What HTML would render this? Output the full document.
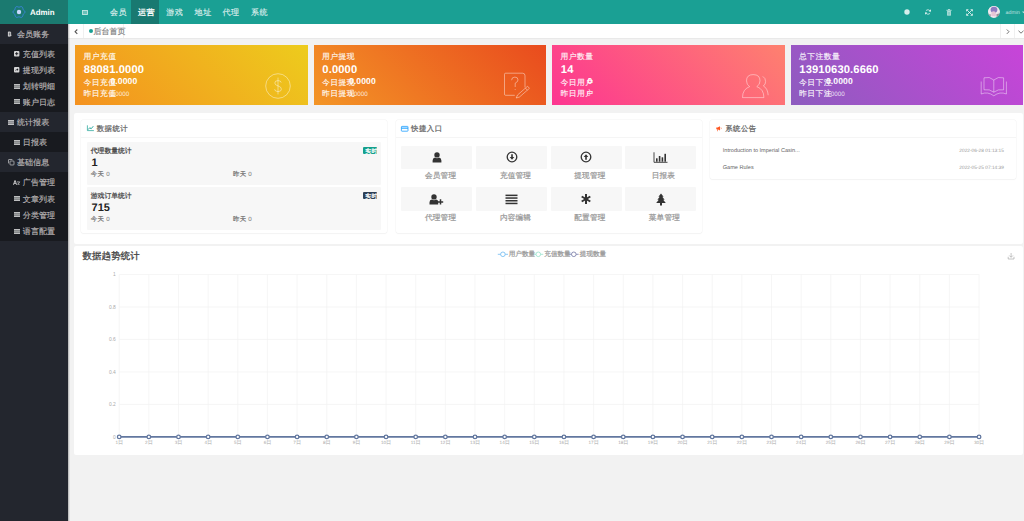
<!DOCTYPE html>
<html lang="zh">
<head>
<meta charset="utf-8">
<title>Admin</title>
<style>
*{margin:0;padding:0;box-sizing:border-box;}
html,body{width:1024px;height:521px;overflow:hidden;}
body{background:#f2f2f2;font-family:"Liberation Sans",sans-serif;position:relative;color:#666;}
.abs{position:absolute;}
.t{position:absolute;white-space:nowrap;line-height:1;}
svg.abs{overflow:visible;}
</style>
</head>
<body>
<div class="abs" style="left:0px;top:0px;width:68px;height:24px;background:#1b7a70;"></div>
<div class="abs" style="left:68px;top:0px;width:956px;height:24px;background:#1aa094;"></div>
<svg class="abs" style="left:12px;top:5px" width="14" height="14" viewBox="0 0 14 14"><path d="M12.95 7.00 L12.85 7.51 L12.59 7.99 L12.22 8.40 L11.82 8.75 L11.46 9.08 L11.20 9.43 L11.03 9.82 L10.93 10.29 L10.82 10.82 L10.65 11.35 L10.37 11.81 L9.98 12.15 L9.48 12.33 L8.94 12.33 L8.40 12.22 L7.89 12.05 L7.43 11.90 L7.00 11.85 L6.57 11.90 L6.11 12.05 L5.60 12.22 L5.06 12.33 L4.52 12.33 L4.03 12.15 L3.63 11.81 L3.35 11.35 L3.18 10.82 L3.07 10.29 L2.97 9.82 L2.80 9.43 L2.54 9.08 L2.18 8.75 L1.78 8.40 L1.41 7.99 L1.15 7.51 L1.05 7.00 L1.15 6.49 L1.41 6.01 L1.78 5.60 L2.18 5.25 L2.54 4.92 L2.80 4.57 L2.97 4.18 L3.07 3.71 L3.18 3.18 L3.35 2.65 L3.63 2.19 L4.02 1.85 L4.52 1.67 L5.06 1.67 L5.60 1.78 L6.11 1.95 L6.57 2.10 L7.00 2.15 L7.43 2.10 L7.89 1.95 L8.40 1.78 L8.94 1.67 L9.48 1.67 L9.97 1.85 L10.37 2.19 L10.65 2.65 L10.82 3.18 L10.93 3.71 L11.03 4.18 L11.20 4.58 L11.46 4.92 L11.82 5.25 L12.22 5.60 L12.59 6.01 L12.85 6.49 L12.95 7.00Z" fill="none" stroke="#3d86dc" stroke-width="1"/><circle cx="7" cy="7" r="2.2" fill="#c9d9ff"/></svg>
<div class="abs" style="left:131px;top:0px;width:28px;height:24px;background:#197971;"></div>
<svg class="abs" style="left:82px;top:9.5px" width="6" height="5" viewBox="0 0 6 5"><rect x="0.5" y="0.5" width="5" height="4" fill="rgba(255,255,255,.35)" stroke="rgba(255,255,255,.7)" stroke-width="0.9"/></svg>
<svg class="abs" style="left:904px;top:9px" width="6" height="6" viewBox="0 0 6 6"><circle cx="3" cy="3" r="2.7" fill="rgba(255,255,255,.82)"/></svg>
<svg class="abs" style="left:924.7px;top:9px" width="6" height="6" viewBox="0 0 6 6" fill="none" stroke="rgba(255,255,255,.82)" stroke-width="0.85"><path d="M5.2 2.4 A2.4 2.4 0 0 0 0.9 1.9"/><path d="M0.8 3.6 A2.4 2.4 0 0 0 5.1 4.1"/></svg><svg class="abs" style="left:924.7px;top:9px" width="6" height="6" viewBox="0 0 6 6" fill="rgba(255,255,255,.82)"><path d="M3.6 2.6 H6 V0.3 Z"/><path d="M2.4 3.4 H0 V5.7 Z"/></svg>
<svg class="abs" style="left:945.7px;top:8.6px" width="6" height="7" viewBox="0 0 6 7"><path d="M1.1 2.1 H4.9 V6.6 H1.1 Z" fill="rgba(255,255,255,.72)"/><path d="M0.4 1.3 H5.6" stroke="rgba(255,255,255,.72)" stroke-width="0.9"/><path d="M2 0.5 H4" stroke="rgba(255,255,255,.72)" stroke-width="0.8"/><path d="M2.3 3 V5.8 M3.7 3 V5.8" stroke="#1aa094" stroke-width="0.4"/></svg>
<svg class="abs" style="left:966px;top:8.6px" width="7" height="7" viewBox="0 0 7 7"><path d="M1.4 1.4 L5.6 5.6 M5.6 1.4 L1.4 5.6" stroke="rgba(255,255,255,.85)" stroke-width="0.9"/><g fill="rgba(255,255,255,.85)"><path d="M0.2 0.2 H2.8 L0.2 2.8 Z"/><path d="M6.8 0.2 H4.2 L6.8 2.8 Z"/><path d="M0.2 6.8 H2.8 L0.2 4.2 Z"/><path d="M6.8 6.8 H4.2 L6.8 4.2 Z"/></g></svg>
<svg class="abs" style="left:987.9px;top:6.4px" width="12" height="12" viewBox="0 0 12 12"><defs><clipPath id="av"><circle cx="5.9" cy="5.9" r="5.9"/></clipPath><filter id="avb"><feGaussianBlur stdDeviation="0.45"/></filter></defs><g clip-path="url(#av)"><rect width="12" height="12" fill="#ddd5dc"/><g filter="url(#avb)"><path d="M0 4 Q0 0 4 0 L8 0 Q12 0 12 4 V7 L10 6 Q11 9 12 10 V12 H0 V10 Q1.5 8 1 6 L0 7 Z" fill="#efeaee"/><ellipse cx="6" cy="3.8" rx="3.4" ry="3.1" fill="#8c7bc2"/><ellipse cx="5.6" cy="8.4" rx="2.3" ry="3.2" fill="#e6c6d6"/><path d="M8.5 8 L12 7.5 V12 H8.5 Z" fill="#9c8c98"/><path d="M0 8.5 L2.8 8.2 L2.5 12 H0 Z" fill="#a495a4"/><path d="M3 10.5 Q6 9.8 8.5 11 V12 H3 Z" fill="#f4f0f6"/></g></g></svg>
<svg class="abs" style="left:1021.5px;top:11px" width="3" height="3" viewBox="0 0 3 3"><path d="M0 0.4 H3 L1.5 2.2 Z" fill="rgba(255,255,255,.7)"/></svg>
<div class="abs" style="left:0px;top:24px;width:68px;height:497px;background:#23262e;z-index:1"></div>
<div class="abs" style="left:0;top:0;width:68px;height:521px;z-index:2"><div class="abs" style="left:0px;top:44px;width:68px;height:68px;background:#181a1f;"></div><div class="abs" style="left:0px;top:132px;width:68px;height:20px;background:#181a1f;"></div><div class="abs" style="left:0px;top:172px;width:68px;height:69px;background:#181a1f;"></div><svg class="abs" style="left:7.2px;top:30.8px" width="5" height="6" viewBox="0 0 5 6"><path d="M0.9 0.9 H2.9 Q4.3 0.9 4.3 2.1 Q4.3 2.8 3.5 3 Q4.5 3.3 4.5 4.2 Q4.5 5.2 3 5.2 H0.9 Z" fill="rgba(255,255,255,.82)"/><path d="M1.8 1.8 H2.8 Q3.3 1.8 3.3 2.2 Q3.3 2.6 2.8 2.6 H1.8 Z M1.8 3.5 H2.9 Q3.5 3.5 3.5 3.9 Q3.5 4.3 2.9 4.3 H1.8 Z" fill="#23262e"/><path d="M1.8 0 V1 M2.9 0 V1 M1.8 5.1 V6 M2.9 5.1 V6" stroke="rgba(255,255,255,.82)" stroke-width="0.5"/></svg><svg class="abs" style="left:14.2px;top:51.3px" width="5.4" height="5.4" viewBox="0 0 5.4 5.4"><rect width="5.4" height="5.4" rx="0.9" fill="rgba(255,255,255,.82)"/><path d="M2.7 1.1 V4.3 M1.1 2.7 H4.3" stroke="#181a1f" stroke-width="0.9"/></svg><svg class="abs" style="left:14.2px;top:67.3px" width="5.4" height="5.4" viewBox="0 0 5.4 5.4"><rect width="5.4" height="5.4" rx="0.9" fill="rgba(255,255,255,.82)"/><path d="M1.2 4.2 Q1.3 2.4 3.1 2.2 V1.3 L4.4 2.6 L3.1 3.9 V3 Q2.1 3 1.2 4.2 Z" fill="#181a1f"/></svg><svg class="abs" style="left:13.90px;top:83.50px" width="6" height="5" viewBox="0 0 6 5"><rect width="6" height="5" fill="rgba(255,255,255,.72)"/><path d="M0 1.75 H6 M0 3.25 H6" stroke="#181a1f" stroke-width="0.45"/></svg><svg class="abs" style="left:13.90px;top:99.30px" width="6" height="5" viewBox="0 0 6 5"><rect width="6" height="5" fill="rgba(255,255,255,.72)"/><path d="M0 1.75 H6 M0 3.25 H6" stroke="#181a1f" stroke-width="0.45"/></svg><svg class="abs" style="left:13.90px;top:139.70px" width="6" height="5" viewBox="0 0 6 5"><rect width="6" height="5" fill="rgba(255,255,255,.72)"/><path d="M0 1.75 H6 M0 3.25 H6" stroke="#181a1f" stroke-width="0.45"/></svg><svg class="abs" style="left:13.90px;top:196.30px" width="6" height="5" viewBox="0 0 6 5"><rect width="6" height="5" fill="rgba(255,255,255,.72)"/><path d="M0 1.75 H6 M0 3.25 H6" stroke="#181a1f" stroke-width="0.45"/></svg><svg class="abs" style="left:13.90px;top:212.40px" width="6" height="5" viewBox="0 0 6 5"><rect width="6" height="5" fill="rgba(255,255,255,.72)"/><path d="M0 1.75 H6 M0 3.25 H6" stroke="#181a1f" stroke-width="0.45"/></svg><svg class="abs" style="left:13.90px;top:228.50px" width="6" height="5" viewBox="0 0 6 5"><rect width="6" height="5" fill="rgba(255,255,255,.72)"/><path d="M0 1.75 H6 M0 3.25 H6" stroke="#181a1f" stroke-width="0.45"/></svg><svg class="abs" style="left:7.70px;top:119.70px" width="6" height="5" viewBox="0 0 6 5"><rect width="6" height="5" fill="rgba(255,255,255,.72)"/><path d="M0 1.75 H6 M0 3.25 H6" stroke="#23262e" stroke-width="0.45"/></svg><svg class="abs" style="left:7.6px;top:159px" width="6.4" height="6.4" viewBox="0 0 6.4 6.4" fill="none" stroke="rgba(255,255,255,.72)" stroke-width="0.75"><rect x="2" y="2" width="4" height="4" rx="0.7"/><path d="M0.5 4.4 V1 Q0.5 0.5 1 0.5 H4.4"/></svg><svg class="abs" style="left:13.4px;top:180.2px" width="7" height="5" viewBox="0 0 7 5"><path d="M0 4.8 L1.6 0.3 H2.5 L4 4.8 H3.1 L2.75 3.7 H1.3 L0.95 4.8 Z M1.55 2.9 H2.5 L2.05 1.4 Z" fill="rgba(255,255,255,.82)"/><path d="M3.8 1.9 H6.8 L4.6 4.3 H6.6" fill="none" stroke="rgba(255,255,255,.82)" stroke-width="0.7"/></svg></div>
<div class="abs" style="left:68px;top:24px;width:2px;height:497px;background:linear-gradient(to right,rgba(0,0,0,.28),rgba(0,0,0,0));z-index:2"></div>
<div class="abs" style="left:68px;top:24px;width:956px;height:14px;background:#fff;"></div>
<div class="abs" style="left:68px;top:38px;width:956px;height:1px;background:rgba(0,0,0,.035);"></div>
<svg class="abs" style="left:73.5px;top:28.6px" width="4" height="5.4" viewBox="0 0 4 5.4"><path d="M3.3 0.5 L1.1 2.7 L3.3 4.9" fill="none" stroke="#555" stroke-width="1.1"/></svg>
<div class="abs" style="left:83.3px;top:24px;width:0.6px;height:14px;background:#f0f0f0;"></div>
<div class="abs" style="left:88.7px;top:29.4px;width:4px;height:4px;border-radius:50%;background:#1aa094"></div>
<div class="abs" style="left:123.2px;top:24px;width:0.6px;height:14px;background:#f0f0f0;"></div>
<div class="abs" style="left:1000px;top:24px;width:0.6px;height:14px;background:#f0f0f0;"></div>
<svg class="abs" style="left:1005.8px;top:28.6px" width="4" height="5.4" viewBox="0 0 4 5.4"><path d="M0.8 0.5 L3 2.7 L0.8 4.9" fill="none" stroke="#666" stroke-width="0.9"/></svg>
<div class="abs" style="left:1014px;top:24px;width:0.6px;height:14px;background:#f0f0f0;"></div>
<svg class="abs" style="left:1017.6px;top:29.6px" width="6" height="4" viewBox="0 0 6 4"><path d="M0.5 0.8 L3 3.2 L5.5 0.8" fill="none" stroke="#666" stroke-width="0.9"/></svg>
<div class="abs" style="left:75px;top:45px;width:232.5px;height:60px;background:linear-gradient(45deg,#f4911f,#edcc1d)"></div>
<svg class="abs" style="left:264.6px;top:73.3px" width="26" height="26" viewBox="0 0 26 26"><circle cx="13" cy="13" r="12.3" fill="none" stroke="rgba(255,255,255,.45)" stroke-width="0.95"/><path d="M16.2 9.6 Q16 7.6 13 7.6 Q9.8 7.6 9.8 10 Q9.8 12 13 12.9 Q16.4 13.8 16.4 16.1 Q16.4 18.6 13 18.6 Q9.8 18.6 9.6 16.2 M13 4.6 V21.4" fill="none" stroke="rgba(255,255,255,.45)" stroke-width="0.95"/></svg>
<div class="abs" style="left:313.5px;top:45px;width:232.5px;height:60px;background:linear-gradient(45deg,#f39526,#e94b1e)"></div>
<svg class="abs" style="left:502.5px;top:72px" width="28" height="28" viewBox="0 0 28 28" fill="none" stroke="rgba(255,255,255,.45)" stroke-width="0.95"><path d="M11.8 23.3 H2.6 Q1.5 23.3 1.5 22.2 V2.3 Q1.5 1.2 2.6 1.2 H19.5 Q22 1.2 22 3.7 V15.5"/><path d="M8.6 8.2 Q8.6 5.1 11.9 5.1 Q15 5.1 15 7.9 Q15 9.8 12.2 11.2 V15"/><path d="M12.2 17.2 V18"/><path d="M13.2 26 L14.55 22.97 L24.58 14.24 L26.42 16.36 L16.39 25.09 Z M22.47 16.08 L24.31 18.2"/></svg>
<div class="abs" style="left:552px;top:45px;width:232.5px;height:60px;background:linear-gradient(45deg,#fd3591,#fe816f)"></div>
<svg class="abs" style="left:740.5px;top:73px" width="30" height="27" viewBox="0 0 30 27" fill="none" stroke="rgba(255,255,255,.45)" stroke-width="0.95"><path d="M1.5 24.6 H22.9 Q22.9 16.2 15.8 13.6 Q19 11.8 19 7.8 Q19 1.6 12.2 1.6 Q5.5 1.6 5.5 7.8 Q5.5 11.8 8.7 13.6 Q1.5 16.2 1.5 24.6 Z"/><path d="M21.8 3.4 Q24.6 5 24.6 8.6 Q24.6 11.2 22.4 13 Q26.6 15.2 27.2 22.2"/></svg>
<div class="abs" style="left:790.5px;top:45px;width:232.5px;height:60px;background:linear-gradient(45deg,#8d5cbf,#c844d9)"></div>
<svg class="abs" style="left:979.5px;top:75px" width="28" height="22" viewBox="0 0 28 22" fill="none" stroke="rgba(255,255,255,.45)" stroke-width="0.95"><path d="M13.8 17.2 Q9.6 13.8 4 14.8 V2.8 Q9.6 1.2 13.8 5 Q18 1.2 23.6 2.8 V14.8 Q18 13.8 13.8 17.2 Z M13.8 5 V17.2"/><path d="M1.2 6.5 V19 Q7.6 16.2 13.8 20.8 Q20 16.2 26.4 19 V6.5"/></svg>
<div class="abs" style="left:74px;top:113px;width:949px;height:131px;background:#fff;border-radius:2px"></div>
<div class="abs" style="left:81px;top:120px;width:306px;height:113px;background:#fff;border-radius:2px;box-shadow:0 0 0 0.5px rgba(0,0,0,.045),0 0.5px 1.5px rgba(0,0,0,.03)"></div>
<div class="abs" style="left:395.5px;top:120px;width:306px;height:112.5px;background:#fff;border-radius:2px;box-shadow:0 0 0 0.5px rgba(0,0,0,.045),0 0.5px 1.5px rgba(0,0,0,.03)"></div>
<div class="abs" style="left:710px;top:120px;width:306px;height:59px;background:#fff;border-radius:2px;box-shadow:0 0 0 0.5px rgba(0,0,0,.045),0 0.5px 1.5px rgba(0,0,0,.03)"></div>
<div class="abs" style="left:81px;top:137.3px;width:306px;height:0.6px;background:#f5f5f5;"></div>
<div class="abs" style="left:395.5px;top:137.3px;width:306px;height:0.6px;background:#f5f5f5;"></div>
<div class="abs" style="left:710px;top:137.3px;width:306px;height:0.6px;background:#f5f5f5;"></div>
<svg class="abs" style="left:87px;top:125.2px" width="7" height="6" viewBox="0 0 7 6"><path d="M0.4 0.3 V5.6 H6.9" fill="none" stroke="#1aa094" stroke-width="0.7"/><path d="M1.1 4.6 L2.8 2.7 L4.1 3.8 L6.3 1.2" fill="none" stroke="#1aa094" stroke-width="0.9"/></svg>
<svg class="abs" style="left:401px;top:125.5px" width="7.4" height="5.6" viewBox="0 0 7.4 5.6"><rect x="0.4" y="0.4" width="6.6" height="4.8" rx="0.5" fill="none" stroke="#1e9fff" stroke-width="0.8"/><rect x="0.4" y="1.6" width="6.6" height="1.1" fill="#1e9fff"/></svg>
<svg class="abs" style="left:715.6px;top:125.6px" width="6.4" height="5.6" viewBox="0 0 6.4 5.6"><path d="M0.3 1.6 H1.6 L4 0.3 V4.4 L1.6 3.3 V5.2 H1 V3.3 H0.3 Z" fill="#ff5722"/><path d="M4.9 1.5 Q5.7 2.3 4.9 3.2" fill="none" stroke="#ff5722" stroke-width="0.6"/></svg>
<div class="abs" style="left:87px;top:142px;width:294px;height:42.5px;background:#f7f7f7;border-radius:1px"></div>
<div class="abs" style="left:362.5px;top:147.2px;width:14.6px;height:6.8px;background:#16a08c;border-radius:1px"></div>
<div class="abs" style="left:87px;top:187px;width:294px;height:42.5px;background:#f7f7f7;border-radius:1px"></div>
<div class="abs" style="left:362.5px;top:192.2px;width:14.6px;height:6.8px;background:#2f4056;border-radius:1px"></div>
<div class="abs" style="left:401.2px;top:145.7px;width:71px;height:23.6px;background:#f7f7f7;border-radius:1px;display:flex;align-items:center;justify-content:center"><svg width="10" height="11" viewBox="0 0 10 11"><circle cx="5" cy="2.9" r="2.7" fill="#333"/><path d="M0.6 10.6 V8.4 Q0.6 6 3 5.6 Q5 6.8 7 5.6 Q9.4 6 9.4 8.4 V10.6 Z" fill="#333"/></svg></div>
<div class="abs" style="left:476.1px;top:145.7px;width:71px;height:23.6px;background:#f7f7f7;border-radius:1px;display:flex;align-items:center;justify-content:center"><svg width="12" height="12" viewBox="0 0 12 12"><circle cx="6" cy="6" r="4.8" fill="none" stroke="#333" stroke-width="1.3"/><path d="M5.2 3.2 H6.8 V5.9 H8.3 L6 8.7 L3.7 5.9 H5.2 Z" fill="#333"/></svg></div>
<div class="abs" style="left:550.5px;top:145.7px;width:71px;height:23.6px;background:#f7f7f7;border-radius:1px;display:flex;align-items:center;justify-content:center"><svg width="12" height="12" viewBox="0 0 12 12"><circle cx="6" cy="6" r="4.8" fill="none" stroke="#333" stroke-width="1.3"/><path d="M5.2 8.8 H6.8 V6.1 H8.3 L6 3.3 L3.7 6.1 H5.2 Z" fill="#333"/></svg></div>
<div class="abs" style="left:625px;top:145.7px;width:71px;height:23.6px;background:#f7f7f7;border-radius:1px;display:flex;align-items:center;justify-content:center"><svg width="15" height="11" viewBox="0 0 15 11"><path d="M1 0.3 V10.3 H14.5" fill="none" stroke="#333" stroke-width="0.9"/><rect x="3" y="6.3" width="1.6" height="3.4" fill="#333"/><rect x="5.8" y="4" width="1.6" height="5.7" fill="#333"/><rect x="8.6" y="5.3" width="1.6" height="4.4" fill="#333"/><rect x="11.4" y="1.8" width="1.6" height="7.9" fill="#333"/></svg></div>
<div class="abs" style="left:401.2px;top:187.4px;width:71px;height:23.6px;background:#f7f7f7;border-radius:1px;display:flex;align-items:center;justify-content:center"><svg width="15" height="11" viewBox="0 0 15 11"><circle cx="5" cy="2.9" r="2.7" fill="#333"/><path d="M0.5 10.4 V8.2 Q0.5 6 3 5.6 Q5 6.8 7 5.6 Q8.6 5.8 9.2 7 V10.4 Z" fill="#333"/><path d="M8.8 7.9 H14.2 M11.5 5.2 V10.6" stroke="#333" stroke-width="1.5"/></svg></div>
<div class="abs" style="left:476.1px;top:187.4px;width:71px;height:23.6px;background:#f7f7f7;border-radius:1px;display:flex;align-items:center;justify-content:center"><svg width="13" height="11" viewBox="0 0 13 11"><rect x="0.5" y="0.6" width="12" height="1.5" fill="#333"/><rect x="0.5" y="3.3" width="12" height="1.5" fill="#333"/><rect x="0.5" y="6" width="12" height="1.5" fill="#333"/><rect x="0.5" y="8.7" width="12" height="1.5" fill="#333"/></svg></div>
<div class="abs" style="left:550.5px;top:187.4px;width:71px;height:23.6px;background:#f7f7f7;border-radius:1px;display:flex;align-items:center;justify-content:center"><svg width="12" height="12" viewBox="0 0 12 12"><g stroke="#333" stroke-width="2"><path d="M6 1 V11"/><path d="M1.7 3.5 L10.3 8.5"/><path d="M1.7 8.5 L10.3 3.5"/></g></svg></div>
<div class="abs" style="left:625px;top:187.4px;width:71px;height:23.6px;background:#f7f7f7;border-radius:1px;display:flex;align-items:center;justify-content:center"><svg width="12" height="13" viewBox="0 0 12 13"><path d="M6 0.5 L8.6 3.8 H7.3 L9.6 6.8 H8.2 L10.8 10 H7 V12.5 H5 V10 H1.2 L3.8 6.8 H2.4 L4.7 3.8 H3.4 Z" fill="#333"/></svg></div>
<div class="abs" style="left:74px;top:246px;width:949px;height:209px;background:#fff;border-radius:2px"></div>
<div class="abs" style="left:0;top:0;width:1024px;height:521px;pointer-events:none"><svg class="abs" style="left:0;top:0" width="1024" height="521" viewBox="0 0 1024 521"><path d="M119.20 274.50V436.90M148.85 274.50V436.90M178.50 274.50V436.90M208.15 274.50V436.90M237.80 274.50V436.90M267.45 274.50V436.90M297.10 274.50V436.90M326.75 274.50V436.90M356.40 274.50V436.90M386.05 274.50V436.90M415.70 274.50V436.90M445.35 274.50V436.90M475.00 274.50V436.90M504.65 274.50V436.90M534.30 274.50V436.90M563.95 274.50V436.90M593.60 274.50V436.90M623.25 274.50V436.90M652.90 274.50V436.90M682.55 274.50V436.90M712.20 274.50V436.90M741.85 274.50V436.90M771.50 274.50V436.90M801.15 274.50V436.90M830.80 274.50V436.90M860.45 274.50V436.90M890.10 274.50V436.90M919.75 274.50V436.90M949.40 274.50V436.90M979.05 274.50V436.90M119.20 274.50H979.05M119.20 306.98H979.05M119.20 339.46H979.05M119.20 371.94H979.05M119.20 404.42H979.05" stroke="#f2f2f2" stroke-width="0.7" fill="none"/><g font-family="Liberation Sans" font-size="4.9" fill="#aaa" text-anchor="end"><text x="115.80" y="276.25">1</text><text x="115.80" y="308.73">0.8</text><text x="115.80" y="341.21">0.6</text><text x="115.80" y="373.69">0.4</text><text x="115.80" y="406.17">0.2</text><text x="115.80" y="438.65">0</text></g><g font-family="Liberation Sans" font-size="4.6" fill="#aaa" text-anchor="middle" text-rendering="geometricPrecision"><text x="119.30" y="444">1<tspan font-size="5.2">日</tspan></text><text x="148.95" y="444">2<tspan font-size="5.2">日</tspan></text><text x="178.60" y="444">3<tspan font-size="5.2">日</tspan></text><text x="208.25" y="444">4<tspan font-size="5.2">日</tspan></text><text x="237.90" y="444">5<tspan font-size="5.2">日</tspan></text><text x="267.55" y="444">6<tspan font-size="5.2">日</tspan></text><text x="297.20" y="444">7<tspan font-size="5.2">日</tspan></text><text x="326.85" y="444">8<tspan font-size="5.2">日</tspan></text><text x="356.50" y="444">9<tspan font-size="5.2">日</tspan></text><text x="386.15" y="444">10<tspan font-size="5.2">日</tspan></text><text x="415.80" y="444">11<tspan font-size="5.2">日</tspan></text><text x="445.45" y="444">12<tspan font-size="5.2">日</tspan></text><text x="475.10" y="444">13<tspan font-size="5.2">日</tspan></text><text x="504.75" y="444">14<tspan font-size="5.2">日</tspan></text><text x="534.40" y="444">15<tspan font-size="5.2">日</tspan></text><text x="564.05" y="444">16<tspan font-size="5.2">日</tspan></text><text x="593.70" y="444">17<tspan font-size="5.2">日</tspan></text><text x="623.35" y="444">18<tspan font-size="5.2">日</tspan></text><text x="653.00" y="444">19<tspan font-size="5.2">日</tspan></text><text x="682.65" y="444">20<tspan font-size="5.2">日</tspan></text><text x="712.30" y="444">21<tspan font-size="5.2">日</tspan></text><text x="741.95" y="444">22<tspan font-size="5.2">日</tspan></text><text x="771.60" y="444">23<tspan font-size="5.2">日</tspan></text><text x="801.25" y="444">24<tspan font-size="5.2">日</tspan></text><text x="830.90" y="444">25<tspan font-size="5.2">日</tspan></text><text x="860.55" y="444">26<tspan font-size="5.2">日</tspan></text><text x="890.20" y="444">27<tspan font-size="5.2">日</tspan></text><text x="919.85" y="444">28<tspan font-size="5.2">日</tspan></text><text x="949.50" y="444">29<tspan font-size="5.2">日</tspan></text><text x="979.15" y="444">30<tspan font-size="5.2">日</tspan></text></g><path d="M119.20 436.90H979.05" stroke="#62779f" stroke-width="1.8" fill="none"/><g fill="#fff" stroke="#62779f" stroke-width="1.3"><circle cx="119.20" cy="436.90" r="1.8"/><circle cx="148.85" cy="436.90" r="1.8"/><circle cx="178.50" cy="436.90" r="1.8"/><circle cx="208.15" cy="436.90" r="1.8"/><circle cx="237.80" cy="436.90" r="1.8"/><circle cx="267.45" cy="436.90" r="1.8"/><circle cx="297.10" cy="436.90" r="1.8"/><circle cx="326.75" cy="436.90" r="1.8"/><circle cx="356.40" cy="436.90" r="1.8"/><circle cx="386.05" cy="436.90" r="1.8"/><circle cx="415.70" cy="436.90" r="1.8"/><circle cx="445.35" cy="436.90" r="1.8"/><circle cx="475.00" cy="436.90" r="1.8"/><circle cx="504.65" cy="436.90" r="1.8"/><circle cx="534.30" cy="436.90" r="1.8"/><circle cx="563.95" cy="436.90" r="1.8"/><circle cx="593.60" cy="436.90" r="1.8"/><circle cx="623.25" cy="436.90" r="1.8"/><circle cx="652.90" cy="436.90" r="1.8"/><circle cx="682.55" cy="436.90" r="1.8"/><circle cx="712.20" cy="436.90" r="1.8"/><circle cx="741.85" cy="436.90" r="1.8"/><circle cx="771.50" cy="436.90" r="1.8"/><circle cx="801.15" cy="436.90" r="1.8"/><circle cx="830.80" cy="436.90" r="1.8"/><circle cx="860.45" cy="436.90" r="1.8"/><circle cx="890.10" cy="436.90" r="1.8"/><circle cx="919.75" cy="436.90" r="1.8"/><circle cx="949.40" cy="436.90" r="1.8"/><circle cx="979.05" cy="436.90" r="1.8"/></g><g stroke-width="0.75" fill="#fff">
<path d="M497.8 254.3 H508" stroke="#64b5f0"/><circle cx="502.9" cy="254.3" r="2.3" stroke="#64b5f0"/>
<path d="M533.4 254.3 H543.2" stroke="#90e0c8"/><circle cx="538.3" cy="254.3" r="2.3" stroke="#90e0c8"/>
<path d="M569 254.3 H578.6" stroke="#6c70a0"/><circle cx="573.8" cy="254.3" r="2.3" stroke="#6c70a0"/>
</g>
<g fill="none" stroke="#aaa" stroke-width="0.7"><path d="M1011.1 253 V257.2 M1009.3 255.5 L1011.1 257.3 L1012.9 255.5 M1008.2 256.8 V259 H1014 V256.8"/></g></svg></div>
<svg class="abs" style="left:0;top:0;z-index:5" width="1024" height="521" viewBox="0 0 1024 521" font-family="Liberation Sans" text-rendering="geometricPrecision"><defs><filter id="cb" x="-10%" y="-30%" width="120%" height="160%"><feGaussianBlur stdDeviation="0.4"/></filter></defs><text x="30.08" y="15" font-size="7.9" fill="#fff" font-weight="bold">Admin</text><text x="110.00" y="15" font-size="8" fill="rgba(255,255,255,.72)" letter-spacing="0.6" stroke="rgba(255,255,255,.72)" stroke-width="0.22">会员</text><text x="138.00" y="15" font-size="8" fill="#fff" letter-spacing="0.6" stroke="#fff" stroke-width="0.3">运营</text><text x="166.20" y="15" font-size="8" fill="rgba(255,255,255,.72)" letter-spacing="0.6" stroke="rgba(255,255,255,.72)" stroke-width="0.22">游戏</text><text x="194.60" y="15" font-size="8" fill="rgba(255,255,255,.72)" letter-spacing="0.6" stroke="rgba(255,255,255,.72)" stroke-width="0.22">地址</text><text x="222.50" y="15" font-size="8" fill="rgba(255,255,255,.72)" letter-spacing="0.6" stroke="rgba(255,255,255,.72)" stroke-width="0.22">代理</text><text x="250.90" y="15" font-size="8" fill="rgba(255,255,255,.72)" letter-spacing="0.6" stroke="rgba(255,255,255,.72)" stroke-width="0.22">系统</text><text x="1005.59" y="14" font-size="5.3" fill="rgba(255,255,255,.7)">admin</text><text x="16.90" y="37" font-size="8" fill="rgba(205,200,200,.78)" letter-spacing="0.1" stroke="rgba(205,200,200,.78)" stroke-width="0.22">会员账务</text><text x="22.80" y="57" font-size="8" fill="rgba(205,200,200,.78)" letter-spacing="0.1" stroke="rgba(205,200,200,.78)" stroke-width="0.22">充值列表</text><text x="22.80" y="73" font-size="8" fill="rgba(205,200,200,.78)" letter-spacing="0.1" stroke="rgba(205,200,200,.78)" stroke-width="0.22">提现列表</text><text x="22.80" y="89" font-size="8" fill="rgba(205,200,200,.78)" letter-spacing="0.1" stroke="rgba(205,200,200,.78)" stroke-width="0.22">划转明细</text><text x="22.80" y="105" font-size="8" fill="rgba(205,200,200,.78)" letter-spacing="0.1" stroke="rgba(205,200,200,.78)" stroke-width="0.22">账户日志</text><text x="16.90" y="125" font-size="8" fill="rgba(205,200,200,.78)" letter-spacing="0.1" stroke="rgba(205,200,200,.78)" stroke-width="0.22">统计报表</text><text x="22.80" y="145" font-size="8" fill="rgba(205,200,200,.78)" letter-spacing="0.1" stroke="rgba(205,200,200,.78)" stroke-width="0.22">日报表</text><text x="16.90" y="165" font-size="8" fill="rgba(205,200,200,.78)" letter-spacing="0.1" stroke="rgba(205,200,200,.78)" stroke-width="0.22">基础信息</text><text x="22.80" y="185" font-size="8" fill="rgba(205,200,200,.78)" letter-spacing="0.1" stroke="rgba(205,200,200,.78)" stroke-width="0.22">广告管理</text><text x="22.80" y="202" font-size="8" fill="rgba(205,200,200,.78)" letter-spacing="0.1" stroke="rgba(205,200,200,.78)" stroke-width="0.22">文章列表</text><text x="22.80" y="218" font-size="8" fill="rgba(205,200,200,.78)" letter-spacing="0.1" stroke="rgba(205,200,200,.78)" stroke-width="0.22">分类管理</text><text x="22.80" y="234" font-size="8" fill="rgba(205,200,200,.78)" letter-spacing="0.1" stroke="rgba(205,200,200,.78)" stroke-width="0.22">语言配置</text><text x="93.60" y="34" font-size="8" fill="#888" stroke="#888" stroke-width="0.22">后台首页</text><text x="83.52" y="59" font-size="7.8" fill="rgba(255,255,255,.82)" letter-spacing="0.45" stroke="rgba(255,255,255,.82)" stroke-width="0.22">用户充值</text><text x="83.85" y="73" font-size="11.2" fill="#fff" font-weight="bold" letter-spacing="0.12">88081.0000</text><text x="83.52" y="85" font-size="7.8" fill="rgba(255,255,255,.82)" letter-spacing="0.45" stroke="rgba(255,255,255,.82)" stroke-width="0.22">今日充值</text><text x="110.46" y="84" font-size="8.6" fill="#fff" font-weight="bold" letter-spacing="0.1">0.0000</text><text x="83.52" y="96" font-size="7.8" fill="rgba(255,255,255,.82)" letter-spacing="0.45" stroke="rgba(255,255,255,.82)" stroke-width="0.22">昨日充值</text><text x="109.95" y="96" font-size="6.3" fill="rgba(255,255,255,.82)">0.0000</text><text x="322.02" y="59" font-size="7.8" fill="rgba(255,255,255,.82)" letter-spacing="0.45" stroke="rgba(255,255,255,.82)" stroke-width="0.22">用户提现</text><text x="322.35" y="73" font-size="11.2" fill="#fff" font-weight="bold" letter-spacing="0.12">0.0000</text><text x="322.02" y="85" font-size="7.8" fill="rgba(255,255,255,.82)" letter-spacing="0.45" stroke="rgba(255,255,255,.82)" stroke-width="0.22">今日提现</text><text x="348.96" y="84" font-size="8.6" fill="#fff" font-weight="bold" letter-spacing="0.1">0.0000</text><text x="322.02" y="96" font-size="7.8" fill="rgba(255,255,255,.82)" letter-spacing="0.45" stroke="rgba(255,255,255,.82)" stroke-width="0.22">昨日提现</text><text x="348.45" y="96" font-size="6.3" fill="rgba(255,255,255,.82)">0.0000</text><text x="560.52" y="59" font-size="7.8" fill="rgba(255,255,255,.82)" letter-spacing="0.45" stroke="rgba(255,255,255,.82)" stroke-width="0.22">用户数量</text><text x="560.85" y="73" font-size="11.2" fill="#fff" font-weight="bold" letter-spacing="0.12">14</text><text x="560.52" y="85" font-size="7.8" fill="rgba(255,255,255,.82)" letter-spacing="0.45" stroke="rgba(255,255,255,.82)" stroke-width="0.22">今日用户</text><text x="587.46" y="84" font-size="8.6" fill="#fff" font-weight="bold" letter-spacing="0.1">0</text><text x="560.52" y="96" font-size="7.8" fill="rgba(255,255,255,.82)" letter-spacing="0.45" stroke="rgba(255,255,255,.82)" stroke-width="0.22">昨日用户</text><text x="586.95" y="96" font-size="6.3" fill="rgba(255,255,255,.82)">0</text><text x="799.02" y="59" font-size="7.8" fill="rgba(255,255,255,.82)" letter-spacing="0.45" stroke="rgba(255,255,255,.82)" stroke-width="0.22">总下注数量</text><text x="799.35" y="73" font-size="11.2" fill="#fff" font-weight="bold" letter-spacing="0.12">13910630.6660</text><text x="799.02" y="85" font-size="7.8" fill="rgba(255,255,255,.82)" letter-spacing="0.45" stroke="rgba(255,255,255,.82)" stroke-width="0.22">今日下注</text><text x="825.96" y="84" font-size="8.6" fill="#fff" font-weight="bold" letter-spacing="0.1">0.0000</text><text x="799.02" y="96" font-size="7.8" fill="rgba(255,255,255,.82)" letter-spacing="0.45" stroke="rgba(255,255,255,.82)" stroke-width="0.22">昨日下注</text><text x="825.45" y="96" font-size="6.3" fill="rgba(255,255,255,.82)">0.0000</text><text x="96.66" y="131" font-size="7.4" fill="#666" letter-spacing="0.5" stroke="#666" stroke-width="0.22">数据统计</text><text x="411.06" y="131" font-size="7.4" fill="#666" letter-spacing="0.5" stroke="#666" stroke-width="0.22">快捷入口</text><text x="725.16" y="131" font-size="7.4" fill="#666" letter-spacing="0.5" stroke="#666" stroke-width="0.22">系统公告</text><text x="90.82" y="153" font-size="6.8" fill="#444" stroke="#444" stroke-width="0.22">代理数量统计</text><text x="91.56" y="166" font-size="11" fill="#222" font-weight="bold">1</text><text x="90.86" y="176" font-size="6.4" fill="#777" letter-spacing="0.2" stroke="#777" stroke-width="0.22">今天</text><text x="102.61" y="176" font-size="5.2" fill="#777">:</text><text x="106.17" y="176" font-size="6.2" fill="#777">0</text><text x="233.06" y="176" font-size="6.4" fill="#777" letter-spacing="0.2" stroke="#777" stroke-width="0.22">昨天</text><text x="244.81" y="176" font-size="5.2" fill="#777">:</text><text x="248.37" y="176" font-size="6.2" fill="#777">0</text><text x="365.30" y="153" font-size="5.8" fill="#fff" letter-spacing="0.3" stroke="#fff" stroke-width="0.25">实时</text><text x="90.82" y="198" font-size="6.8" fill="#444" stroke="#444" stroke-width="0.22">游戏订单统计</text><text x="91.56" y="211" font-size="11" fill="#222" font-weight="bold">715</text><text x="90.86" y="221" font-size="6.4" fill="#777" letter-spacing="0.2" stroke="#777" stroke-width="0.22">今天</text><text x="102.61" y="221" font-size="5.2" fill="#777">:</text><text x="106.17" y="221" font-size="6.2" fill="#777">0</text><text x="233.06" y="221" font-size="6.4" fill="#777" letter-spacing="0.2" stroke="#777" stroke-width="0.22">昨天</text><text x="244.81" y="221" font-size="5.2" fill="#777">:</text><text x="248.37" y="221" font-size="6.2" fill="#777">0</text><text x="365.30" y="198" font-size="5.8" fill="#fff" letter-spacing="0.3" stroke="#fff" stroke-width="0.25">实时</text><text x="425.00" y="178" font-size="7.6" fill="#999" letter-spacing="0.2" stroke="#999" stroke-width="0.22">会员管理</text><text x="499.90" y="178" font-size="7.6" fill="#999" letter-spacing="0.2" stroke="#999" stroke-width="0.22">充值管理</text><text x="574.30" y="178" font-size="7.6" fill="#999" letter-spacing="0.2" stroke="#999" stroke-width="0.22">提现管理</text><text x="651.75" y="178" font-size="7.6" fill="#999" letter-spacing="0.2" stroke="#999" stroke-width="0.22">日报表</text><text x="425.00" y="220" font-size="7.6" fill="#999" letter-spacing="0.2" stroke="#999" stroke-width="0.22">代理管理</text><text x="499.90" y="220" font-size="7.6" fill="#999" letter-spacing="0.2" stroke="#999" stroke-width="0.22">内容编辑</text><text x="574.30" y="220" font-size="7.6" fill="#999" letter-spacing="0.2" stroke="#999" stroke-width="0.22">配置管理</text><text x="648.80" y="220" font-size="7.6" fill="#999" letter-spacing="0.2" stroke="#999" stroke-width="0.22">菜单管理</text><text x="722.78" y="152" font-size="5.57" fill="#666">Introduction to Imperial Casin...</text><text x="722.78" y="169" font-size="5.57" fill="#666">Game Rules</text><text x="1003.90" y="152" font-size="4.8" fill="#999" text-anchor="end">2022-06-28 01:13:15</text><text x="1003.90" y="169" font-size="4.8" fill="#999" text-anchor="end">2022-05-25 07:14:39</text><text x="82.46" y="259" font-size="9.4" fill="#444" letter-spacing="0.2" stroke="#444" stroke-width="0.3">数据趋势统计</text><text x="508.74" y="256" font-size="6.6" fill="#999" stroke="#999" stroke-width="0.22">用户数量</text><text x="544.34" y="256" font-size="6.6" fill="#999" stroke="#999" stroke-width="0.22">充值数量</text><text x="579.84" y="256" font-size="6.6" fill="#999" stroke="#999" stroke-width="0.22">提现数量</text></svg>
</body>
</html>
